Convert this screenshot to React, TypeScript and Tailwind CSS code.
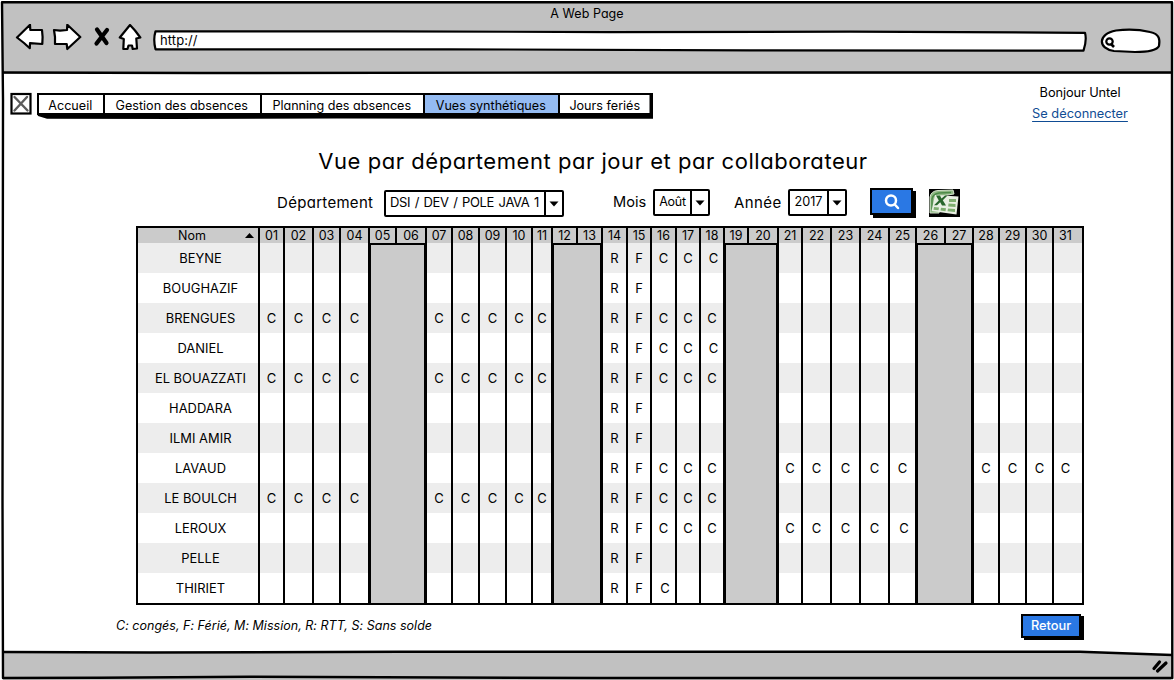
import type { ReactNode } from 'react';

const WEEKEND = new Set([5, 6, 12, 13, 19, 20, 26, 27]);

const range = (from: number, to: number) =>
  Array.from({ length: to - from + 1 }, (_, i) => from + i);

const DAYS = range(1, 31);
const EARLY = [...range(1, 4), ...range(7, 11)];
const MID = range(16, 18);

type Row = { name: string; leave: number[]; shifted?: number };

const ROWS: Row[] = [
  { name: 'BEYNE', leave: MID, shifted: 18 },
  { name: 'BOUGHAZIF', leave: [] },
  { name: 'BRENGUES', leave: [...EARLY, ...MID] },
  { name: 'DANIEL', leave: MID, shifted: 18 },
  { name: 'EL BOUAZZATI', leave: [...EARLY, ...MID] },
  { name: 'HADDARA', leave: [] },
  { name: 'ILMI AMIR', leave: [] },
  { name: 'LAVAUD', leave: [...MID, ...range(21, 25), ...range(28, 31)] },
  { name: 'LE BOULCH', leave: [...EARLY, ...MID] },
  { name: 'LEROUX', leave: [...MID, ...range(21, 25)], shifted: 25 },
  { name: 'PELLE', leave: [] },
  { name: 'THIRIET', leave: [16], shifted: 16 },
];

const GRID =
  'grid grid-cols-[120px_25px_29px_27px_29px_27px_30px_26px_27px_27px_26px_20px_25px_25px_25px_24px_25px_24px_24px_24px_30px_24px_29px_29px_29px_27px_29px_28px_26px_27px_27px_30px]';

function codeFor(row: Row, day: number) {
  if (day === 14) return 'R';
  if (day === 15) return 'F';
  return row.leave.includes(day) ? 'C' : '';
}

function BrowserBar() {
  return (
    <header className="flex h-[73px] flex-col bg-[#c1c1c1]">
      <div className="flex h-[23px] shrink-0 items-center justify-center pt-[3px] text-[12.5px] tracking-[0.05px]">A Web Page</div>
      <div className="flex items-start">
        <svg className="ml-[9px] h-[30px] w-[136px] shrink-0" viewBox="12 24 136 30" fill="#fff" stroke="#000" strokeWidth="2.2" strokeLinejoin="round">
          <path d="M17 37.500 30 24.800 30.3 30 42 30 42.6 37 42.3 44 30 43.200 29.8 48.2 24 43Z" />
          <path d="M54 30 60 30.700 67 30 67.3 24.800 80.3 37 67.3 49 66.7 44 55 44 55 37Z" />
          <path d="M97 29.500 106.500 43M107 30 96.500 43.500" strokeWidth="4.2" strokeLinecap="round" />
          <path d="M130 25 135 30.500 140.3 37.500 136.300 38.500 137 48.500 132.700 49 132 45.500 128.500 45.500 127.500 49 123.300 49 123.800 39 119.800 37.500Z" />
        </svg>
        <div className="relative mt-[5px] ml-[4px] flex h-[20px] w-[936px] shrink-0 items-center">
          <svg className="absolute -top-[2px] -left-[2px] h-[26px] w-[940px]" viewBox="0 0 940 26" fill="#fff" stroke="#000" strokeWidth="2.2" strokeLinejoin="round">
            <path d="M5.500 4 240 4 460 4.800 700 4.300 935 5.500Q937 13 933.500 23.300L600 23 300 22 5.500 22Q3 12 5.500 4Z" transform="translate(0 .3)" />
          </svg>
          <span className="relative mt-[4px] ml-[8px] text-[13px] tracking-[0.1px]">http://</span>
        </div>
        <svg className="mt-[3px] ml-[11px] h-[28px] w-[64px] shrink-0" viewBox="1100 27 64 28" fill="#fff" stroke="#000" strokeWidth="2.2">
          <path d="M1117 30.500Q1135 28.200 1151 32C1161 34 1161 40 1160 46Q1157 52 1136 52L1115 51C1099 49 1098 34 1117 30.500Z" />
          <circle cx="1110.500" cy="41.500" r="3.200" />
          <path d="M1112 44 1115 47" strokeWidth="2.600" />
        </svg>
      </div>
    </header>
  );
}

function Tab({ width, active, children }: { width: string; active?: boolean; children: ReactNode }) {
  return (
    <a className={`flex items-center justify-center border-r-2 border-black pt-[3px] pr-[1.5px] ${width} ${active ? 'bg-[#94bbf2]' : 'bg-white'}`}>
      {children}
    </a>
  );
}

function TopNav() {
  return (
    <div className="flex h-[50px] items-start pl-[7px]">
      <svg className="mt-[18px] h-[23px] w-[22px]" viewBox="0 0 22 23" fill="#fff" stroke="#000">
        <rect x="1.500" y="2" width="19" height="19.500" strokeWidth="2.200" />
        <path d="M4.500 5 17.500 18.500M17 5 4.500 18.500" stroke="#5c5c5c" strokeWidth="2.400" strokeLinecap="round" />
      </svg>
      <nav className="relative mt-[19px] ml-[5px] flex h-[22px] border-y-2 border-l-2 border-black text-[12.6px] leading-[16px]">
        <svg className="absolute top-[17px] -left-[2px] h-[10px] w-[618px] overflow-visible" viewBox="0 0 618 10">
          <path d="M0 1.500H612.500V-19L614.500 -18 616 -6 616 6.800 300 6.500 140 7 10 6.800 1 4Z" />
        </svg>
        <Tab width="w-[66px]">Accueil</Tab>
        <Tab width="w-[157px]">Gestion des absences</Tab>
        <Tab width="w-[163px]">Planning des absences</Tab>
        <Tab width="w-[135px]" active>Vues synthétiques</Tab>
        <Tab width="w-[93px]">Jours feriés</Tab>
      </nav>
      <div className="mt-[8px] mr-[31px] ml-auto flex w-[120px] flex-col items-center text-[12.8px] leading-[21px]">
        <span className="tracking-[-0.1px]">Bonjour Untel</span>
        <a className="text-[#0f4c94] underline decoration-1 underline-offset-[3px]">Se déconnecter</a>
      </div>
    </div>
  );
}

function Select({ width, size, children }: { width: string; size: string; children: ReactNode }) {
  return (
    <div className={`flex h-[27px] rounded-[2px] border-2 border-black bg-white ${width}`}>
      <span className={`flex flex-1 items-center justify-center whitespace-nowrap pb-px ${size}`}>{children}</span>
      <span className="flex w-[18px] items-center justify-center border-l-2 border-black">
        <svg className="h-[6px] w-[10px]" viewBox="0 0 10 6"><path d="M.5.5H9.500L5 5.500Z" /></svg>
      </span>
    </div>
  );
}

function ExcelIcon() {
  return (
    <svg className="h-[28px] w-[31px]" viewBox="0 0 31 28">
      <path d="M0 0H31V28H0Z" />
      <path d="M1 24V8Q2 2 9 1.500L24 1 25 5 12 7 10 24Z" fill="#8fb884" stroke="#d5e5cd" />
      <path d="M3 22V10Q4 5 10 4L22 3.500" fill="none" stroke="#4d8b48" strokeWidth="1.500" />
      <path d="M6 6 29.500 7.500 27.500 25.500 2.500 22Z" fill="#e8efe2" />
      <path d="M20 10H27V13H20ZM19.500 14.500 26.500 15V18L19.200 17.500ZM19 19.500 26 20V23L18.500 22.300ZM12 18.800 17 19.300 16.500 22.200 11.500 21.600ZM5 18 10 18.500 9.500 21.300 4.500 20.700Z" fill="#7eae70" />
      <path d="M7 6.500 11 6.500 12.500 9.500 16 6.500H18.500L13.800 11.300 17 16.500H13L11.200 13.300 8 16.300H5L9.800 11.500Z" fill="#28662c" />
    </svg>
  );
}

function Filters() {
  return (
    <div className="flex h-[39px] items-start pl-[274px] text-[15px]">
      <label className="mt-[5px] w-[97px] whitespace-nowrap text-[15px] tracking-[0.3px]">Département</label>
      <div className="mt-[3px] ml-[10px]"><Select width="w-[180px]" size="pr-[1px] text-[13px] tracking-[-0.35px] [word-spacing:1.2px]">DSI / DEV / POLE JAVA 1</Select></div>
      <label className="mt-[5px] ml-[49px] w-[34px] whitespace-nowrap text-[14.600px]">Mois</label>
      <div className="mt-[2px] ml-[6px]"><Select width="w-[57px]" size="text-[12.5px] tracking-[-0.3px]">Août</Select></div>
      <label className="mt-[5px] ml-[24px] w-[48px] whitespace-nowrap text-[15px] tracking-[0.4px]">Année</label>
      <div className="mt-[2px] ml-[6px]"><Select width="w-[59px]" size="text-[12.7px]">2017</Select></div>
      <button className="mt-px ml-[23px] flex h-[27px] w-[43px] items-center justify-center border-2 border-black bg-[#2a78e4] shadow-[3px_3px_0_#000]">
        <svg className="h-[16px] w-[16px]" viewBox="0 0 16 16" fill="none" stroke="#fff" strokeWidth="2.500" strokeLinecap="round">
          <circle cx="7" cy="6.500" r="5" /><path d="M10.800 10.500 14 14" />
        </svg>
      </button>
      <div className="mt-[2px] ml-[16px]"><ExcelIcon /></div>
    </div>
  );
}

function Planning() {
  return (
    <div className="ml-[133px] w-[948px] border-2 border-black text-[12.5px] leading-none">
      <div className={`${GRID} h-[15px] bg-[#cbcbcb]`}>
        <div className="relative flex items-center justify-center pt-px pr-[12px]">
          Nom
          <svg className="absolute top-[5px] right-[4px] h-[5px] w-[9px]" viewBox="0 0 9 5"><path d="M0 5 4.500 0 9 5Z" /></svg>
        </div>
        {DAYS.map((d) => (
          <div key={d} className={`flex items-center justify-center border-l-2 border-black pt-px ${d === 31 ? 'pr-[5px]' : ''}`}>
            {String(d).padStart(2, '0')}
          </div>
        ))}
      </div>
      {ROWS.map((row, r) => (
        <div key={row.name} className={`${GRID} h-[30px] ${r % 2 ? 'bg-white' : 'bg-[#ededed]'}`}>
          <div className="flex items-center justify-center pt-[2px] pl-[5px] text-[12.9px] tracking-[0.02px]">{row.name}</div>
          {DAYS.map((d) => {
            if (WEEKEND.has(d)) {
              const first = !WEEKEND.has(d - 1);
              return (
                <div
                  key={d}
                  className={`border-black bg-[#cbcbcb] ${first ? 'border-l-[3px]' : 'border-r'} ${r === 0 ? 'border-t-2' : ''}`}
                />
              );
            }
            return (
              <div
                key={d}
                className={`flex items-center justify-center border-l-2 border-black text-[13px] ${d === 31 ? 'pr-[5px]' : ''} ${row.shifted === d ? 'pl-[3px]' : ''}`}
              >
                {codeFor(row, d)}
              </div>
            );
          })}
        </div>
      ))}
    </div>
  );
}

export default function App() {
  return (
    <div className="relative flex h-[680px] w-[1174px] flex-col overflow-hidden bg-white px-[3px] pt-px font-['Inter',sans-serif] text-black [font-feature-settings:'cv11']">
      <BrowserBar />
      <main className="flex flex-1 flex-col">
        <TopNav />
        <h1 className="mt-[19px] ml-[12px] flex h-[36px] items-center justify-center text-[22px] tracking-[0.54px]">
          Vue par département par jour et par collaborateur
        </h1>
        <div className="mt-[8px]"><Filters /></div>
        <Planning />
        <div className="flex items-start pr-[90px] pl-[113px]">
          <p className="mt-[12px] text-[12.5px] tracking-[0.02px] italic">C: congés, F: Férié, M: Mission, R: RTT, S: Sans solde</p>
          <button className="mt-[9px] ml-auto flex h-[24px] w-[60px] items-center justify-center border-2 border-black bg-[#2a78e4] text-[12.8px] font-medium text-white shadow-[3px_2px_0_#000]">
            Retour
          </button>
        </div>
      </main>
      <footer className="flex h-[28px] items-center justify-end bg-[#c1c1c1] pr-[2px]">
        <svg className="h-[16px] w-[18px]" viewBox="0 0 18 16" stroke="#000" strokeWidth="3.200" strokeLinecap="round">
          <path d="M3 10.500 8.500 4M6.500 13 15 5" />
        </svg>
      </footer>
      <svg className="pointer-events-none absolute inset-0 h-[680px] w-[1174px]" viewBox="0 0 1174 680" fill="none" stroke="#000" strokeWidth="2.400" strokeLinejoin="round">
        <path d="M1080 650.500 1171 650.500V655L1080 652.500Z" fill="#fff" stroke="none" />
        <path d="M2 2.300H1172V90L1172.300 678 600 678 250 676.800 100 677.800 3 678 2.500 500 3 100Z" />
        <path d="M3 72.500 200 73 600 72.500 1172 72.500M3 652 150 652.500 400 651.800 1080 651.800 1172 655" />
      </svg>
    </div>
  );
}
